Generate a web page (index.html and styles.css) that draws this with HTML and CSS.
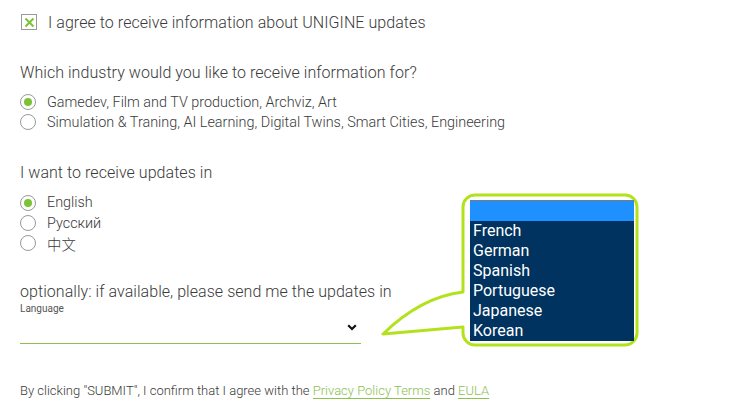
FILE: index.html
```html
<!DOCTYPE html>
<html>
<head>
<meta charset="utf-8">
<link rel="stylesheet" href="styles.css">
</head>
<body>
<div class="form">
  <label class="check-row">
    <span class="checkbox"><svg width="11" height="11" viewBox="0 0 11 11"><path d="M1.5 1.5 L9.5 9.5 M9.5 1.5 L1.5 9.5" stroke="#7cc234" stroke-width="2" fill="none"/></svg></span>
    <span class="check-label">I agree to receive information about UNIGINE updates</span>
  </label>

  <div class="question q1">Which industry would you like to receive information for?</div>
  <div class="options">
    <div class="opt"><span class="radio on"></span>Gamedev, Film and TV production, Archviz, Art</div>
    <div class="opt"><span class="radio"></span>Simulation &amp; Traning, AI Learning, Digital Twins, Smart Cities, Engineering</div>
  </div>

  <div class="question q2">I want to receive updates in</div>
  <div class="options o2">
    <div class="opt"><span class="radio on"></span>English</div>
    <div class="opt"><span class="radio"></span>Русский</div>
    <div class="opt"><span class="radio"></span>中文</div>
  </div>

  <div class="question q3">optionally: if available, please send me the updates in</div>
  <div class="field">
    <div class="field-label">Language</div>
    <div class="select">
      <svg class="chev" width="10" height="7" viewBox="0 0 10 7"><path d="M1.2 1.2 L5 5 L8.8 1.2" stroke="#111" stroke-width="2.2" fill="none"/></svg>
    </div>
  </div>

  <p class="terms">By clicking "SUBMIT", I confirm that I agree with the <a href="#">Privacy Policy Terms</a> and <a href="#">EULA</a></p>
</div>

<svg class="callout" width="270" height="165" viewBox="375 188 270 165">
  <path d="M463 292 Q421 297 383 334 L463 327 L463 333 A12 12 0 0 0 475 345 L625 345 A12 12 0 0 0 637 333 L637 207 A12 12 0 0 0 625 195 L475 195 A12 12 0 0 0 463 207 Z" fill="#fff" stroke="#b3e21c" stroke-width="3" stroke-linejoin="round"/>
</svg>
<div class="listbox">
  <div class="lb-sel"></div>
  <div class="lb-item">French</div>
  <div class="lb-item">German</div>
  <div class="lb-item">Spanish</div>
  <div class="lb-item">Portuguese</div>
  <div class="lb-item">Japanese</div>
  <div class="lb-item">Korean</div>
</div>
</body>
</html>
```

FILE: styles.css
```css
html, body {
  margin: 0;
  padding: 0;
  background: #fff;
}
body {
  font-family: Roboto, "Noto Sans CJK SC", sans-serif;
  font-weight: 300;
  color: #3a3a3a;
  width: 745px;
  height: 420px;
  overflow: hidden;
  position: relative;
}
.form {
  padding: 13px 0 0 20px;
}
.check-row {
  display: flex;
  align-items: center;
  height: 18px;
  font-size: 16px;
  letter-spacing: 0.06px;
}
.checkbox {
  width: 14px;
  height: 14px;
  border: 1px solid #9a9a9a;
  margin-left: 1px;
  margin-right: 11px;
  display: flex;
  align-items: center;
  justify-content: center;
}
.question {
  font-size: 16px;
  line-height: 20px;
  letter-spacing: 0.05px;
}
.q1 { margin-top: 32px; }
.q2 { margin-top: 30px; }
.q3 { margin-top: 29px; }
.options {
  margin-top: 9px;
}
.options.o2 {
  margin-top: 10px;
}
.opt {
  display: flex;
  align-items: center;
  height: 20.3px;
  font-size: 14.4px;
}
.radio {
  width: 14px;
  height: 14px;
  border: 1px solid #9a9a9a;
  border-radius: 50%;
  box-sizing: content-box;
  margin-left: 0;
  margin-right: 11px;
  position: relative;
  flex: none;
}
.radio.on::after {
  content: "";
  position: absolute;
  left: 3px;
  top: 3px;
  width: 8px;
  height: 8px;
  border-radius: 50%;
  background: #7cc234;
}
.field {
  width: 341px;
  margin-top: 0;
}
.field-label {
  font-size: 10px;
  line-height: 13px;
  font-weight: 400;
  color: #555;
}
.select {
  height: 29px;
  border-bottom: 1px solid #8bc34a;
  display: flex;
  justify-content: flex-end;
  align-items: center;
  padding-right: 4px;
  box-sizing: border-box;
}
.chev {
  margin-bottom: 4px;
}
.terms {
  margin: 39px 0 0;
  font-size: 13px;
}
.terms a {
  color: #8cc152;
  text-decoration: none;
  border-bottom: 1px solid #8cc152;
}
.callout {
  position: absolute;
  left: 375px;
  top: 188px;
}
.listbox {
  position: absolute;
  left: 470px;
  top: 200px;
  width: 164px;
  height: 141px;
  background: #00335f;
  border-top: 1px solid #7a7a7a;
  box-sizing: border-box;
  font-family: Roboto, sans-serif;
  font-weight: 400;
  font-size: 16px;
  color: #fff;
}
.lb-sel {
  height: 20px;
  background: #1e90ff;
}
.lb-item {
  height: 20px;
  line-height: 20px;
  padding-left: 3px;
}
```
